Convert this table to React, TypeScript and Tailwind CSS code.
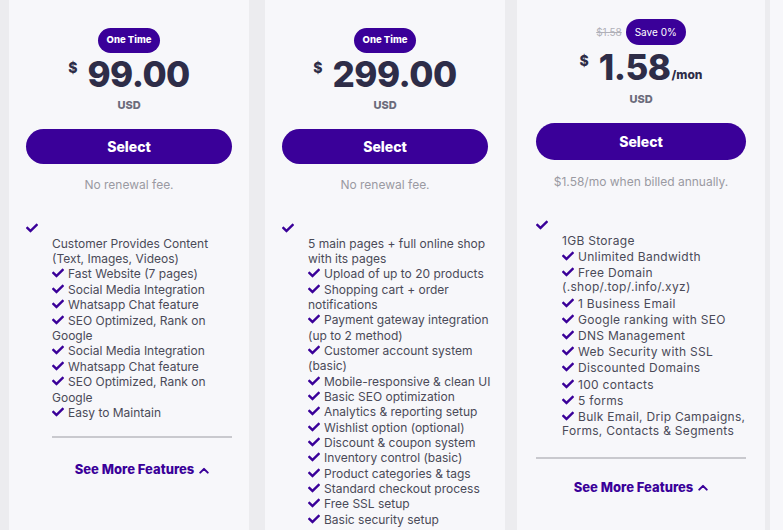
import React from "react";

const PURPLE = "#3a0099";

function Check({ className = "" }: { className?: string }) {
  return (
    <svg viewBox="0 0 512 512" className={className} fill={PURPLE} aria-hidden>
      <path d="M173.898 439.404l-166.4-166.4c-9.997-9.997-9.997-26.206 0-36.204l36.203-36.204c9.997-9.998 26.207-9.998 36.204 0L192 312.69 432.095 72.596c9.997-9.997 26.207-9.997 36.204 0l36.203 36.204c9.997 9.997 9.997 26.206 0 36.204l-294.4 294.401c-9.998 9.997-26.207 9.997-36.204-.001z" />
    </svg>
  );
}

function Chevron() {
  return (
    <svg viewBox="0 0 12 8" className="w-[10px] h-[7px] ml-[5px]" fill="none" stroke={PURPLE} strokeWidth="2.4" strokeLinecap="round" strokeLinejoin="round">
      <path d="M1.5 6.5L6 2l4.5 4.5" />
    </svg>
  );
}

function Item({ text, first }: { text: string; first?: boolean }) {
  return (
    <li>
      {!first && <Check className="inline-block w-[12px] h-[12px] mr-[4px] align-[-1px]" />}
      {text}
    </li>
  );
}

const f1 = [
  "Customer Provides Content (Text, Images, Videos)",
  "Fast Website (7 pages)",
  "Social Media Integration",
  "Whatsapp Chat feature",
  "SEO Optimized, Rank on Google",
  "Social Media Integration",
  "Whatsapp Chat feature",
  "SEO Optimized, Rank on Google",
  "Easy to Maintain",
];

const f2 = [
  "5 main pages + full online shop with its pages",
  "Upload of up to 20 products",
  "Shopping cart + order notifications",
  "Payment gateway integration (up to 2 method)",
  "Customer account system (basic)",
  "Mobile-responsive & clean UI",
  "Basic SEO optimization",
  "Analytics & reporting setup",
  "Wishlist option (optional)",
  "Discount & coupon system",
  "Inventory control (basic)",
  "Product categories & tags",
  "Standard checkout process",
  "Free SSL setup",
  "Basic security setup",
];

const f3 = [
  "1GB Storage",
  "Unlimited Bandwidth",
  "Free Domain (.shop/.top/.info/.xyz)",
  "1 Business Email",
  "Google ranking with SEO",
  "DNS Management",
  "Web Security with SSL",
  "Discounted Domains",
  "100 contacts",
  "5 forms",
  "Bulk Email, Drip Campaigns, Forms, Contacts & Segments",
];

function Price({ amount, suffix, className = "" }: { amount: string; suffix?: string; className?: string }) {
  return (
    <div className={`flex items-start text-[#2e2d48] shrink-0 ${className}`}>
      <span className="text-[14px] font-extrabold mt-[4px] mr-[10px] leading-none">$</span>
      <span className="text-[35px] font-extrabold leading-none tracking-[-0.5px]">{amount}</span>
      {suffix && <span className="text-[12px] font-extrabold self-end mb-[4px] ml-[1px] leading-none">{suffix}</span>}
    </div>
  );
}

function SeeMore() {
  return (
    <div className="flex items-center justify-center text-[13px] font-extrabold" style={{ color: PURPLE }}>
      See More Features
      <Chevron />
    </div>
  );
}

export default function App() {
  return (
    <div
      className="h-[530px] w-[783px] overflow-hidden bg-[#ececef] flex items-stretch pl-[9px]"
      style={{ fontFamily: "Inter, 'Noto Sans', sans-serif" }}
    >
      {/* Card 1 */}
      <div className="w-[240px] shrink-0 bg-[#f7f7fa] flex flex-col items-center px-[17px] pt-[28px] [&>*]:shrink-0">
        <div className="h-[25px] px-[9px] rounded-full flex items-center text-white text-[9.5px] font-extrabold" style={{ background: PURPLE }}>One Time</div>
        <Price amount="99.00" className="mt-[4px]" />
        <div className="text-[11px] font-extrabold text-[#6b6b7b] mt-[5px]">USD</div>
        <button className="w-full h-[35px] rounded-full text-white text-[14px] font-extrabold mt-[15px]" style={{ background: PURPLE }}>Select</button>
        <div className="text-[12px] text-[#9a9aa2] mt-[12px]">No renewal fee.</div>
        <div className="w-full mt-[28px]">
          <Check className="w-[12px] h-[12px]" />
          <ul className="pl-[26px] mt-[2px] text-[12px] leading-[15.4px] text-[#4a4a58]">
            {f1.map((t, i) => <Item key={i} text={t} first={i === 0} />)}
          </ul>
          <div className="ml-[26px]">
            <div className="mt-[16px] h-[2px] bg-[#c9c9ce]" />
            <div className="mt-[22px]"><SeeMore /></div>
          </div>
        </div>
      </div>

      {/* Card 2 */}
      <div className="w-[240px] shrink-0 ml-[16px] bg-[#f7f7fa] flex flex-col items-center px-[17px] pt-[28px] [&>*]:shrink-0">
        <div className="h-[25px] px-[9px] rounded-full flex items-center text-white text-[9.5px] font-extrabold" style={{ background: PURPLE }}>One Time</div>
        <Price amount="299.00" className="mt-[4px]" />
        <div className="text-[11px] font-extrabold text-[#6b6b7b] mt-[5px]">USD</div>
        <button className="w-full h-[35px] rounded-full text-white text-[14px] font-extrabold mt-[15px]" style={{ background: PURPLE }}>Select</button>
        <div className="text-[12px] text-[#9a9aa2] mt-[12px]">No renewal fee.</div>
        <div className="w-full mt-[28px]">
          <Check className="w-[12px] h-[12px]" />
          <ul className="pl-[26px] mr-[-12px] mt-[2px] text-[12px] leading-[15.35px] text-[#4a4a58]">
            {f2.map((t, i) => <Item key={i} text={t} first={i === 0} />)}
          </ul>
        </div>
      </div>

      {/* Card 3 */}
      <div className="w-[248px] shrink-0 ml-[12px] bg-[#f7f7fa] flex flex-col items-center px-[19px] pt-[19px] [&>*]:shrink-0">
        <div className="flex items-center">
          <span className="text-[10px] text-[#b0b0b8] line-through mr-[4px]">$1.58</span>
          <div className="h-[26px] px-[9px] rounded-full flex items-center text-white text-[10px]" style={{ background: PURPLE }}>Save 0%</div>
        </div>
        <Price amount="1.58" suffix="/mon" className="mt-[5px]" />
        <div className="text-[11px] font-extrabold text-[#6b6b7b] mt-[6px]">USD</div>
        <button className="w-full h-[37px] rounded-full text-white text-[14px] font-extrabold mt-[15px]" style={{ background: PURPLE }}>Select</button>
        <div className="text-[12px] text-[#9a9aa2] mt-[13px]">$1.58/mo when billed annually.</div>
        <div className="w-full mt-[28px]">
          <Check className="w-[12px] h-[12px]" />
          <ul className="pl-[26px] mt-[3px] text-[12px] leading-[14.5px] tracking-[0.3px] text-[#4a4a58] flex flex-col gap-[1.7px]">
            {f3.map((t, i) => <Item key={i} text={t} first={i === 0} />)}
          </ul>
          <div className="mt-[18px] h-[2px] bg-[#c9c9ce]" />
          <div className="mt-[19px]"><SeeMore /></div>
        </div>
      </div>

      {/* Card 4 (partially visible) */}
      <div className="w-[240px] shrink-0 ml-[5px] bg-[#f7f7fa]" />
    </div>
  );
}
